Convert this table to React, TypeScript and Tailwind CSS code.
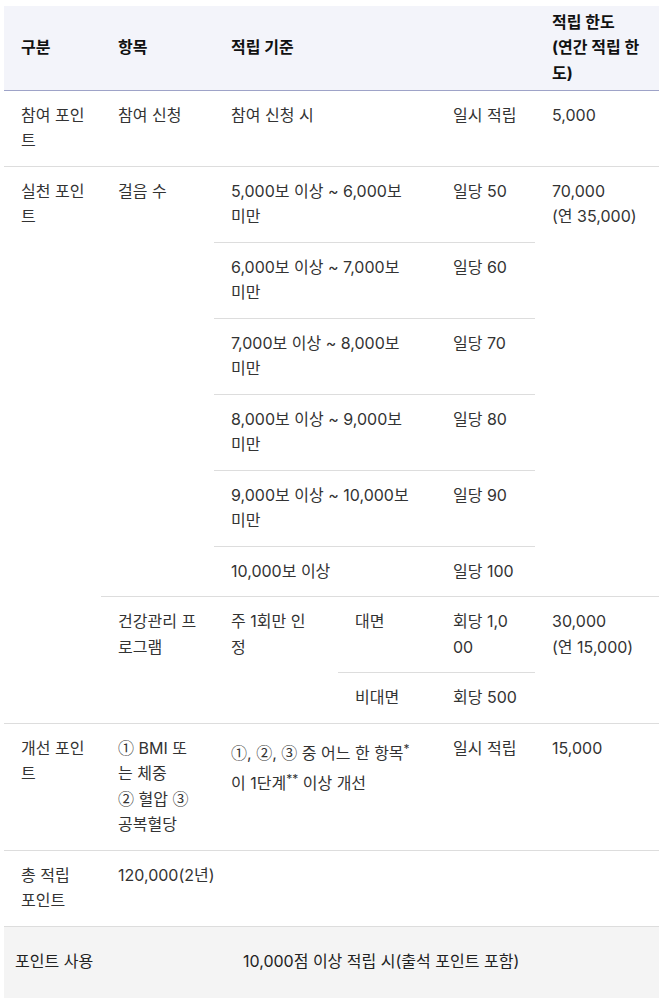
export default function App() {
  const th = "px-[17px] py-[3.5px] text-left align-middle font-bold text-[#111]";
  const td = "pl-[17px] pr-[16px] py-3 align-top border-b border-[#dddddd]";
  const num = "font-['Noto_Sans_CJK_KR'] leading-none";

  const steps = [
    ["5,000보 이상 ~ 6,000보 미만", "일당 50"],
    ["6,000보 이상 ~ 7,000보 미만", "일당 60"],
    ["7,000보 이상 ~ 8,000보 미만", "일당 70"],
    ["8,000보 이상 ~ 9,000보 미만", "일당 80"],
    ["9,000보 이상 ~ 10,000보 미만", "일당 90"],
    ["10,000보 이상", "일당 100"],
  ];

  return (
    <div
      className="bg-white px-[4px] pt-[6px] text-[16px] leading-[25.5px] text-[#333] [word-break:break-all]"
      style={{ fontFamily: 'Inter, "Noto Sans CJK KR", sans-serif' }}
    >
      {/* 포인트 적립 표 */}
      <table className="w-full table-fixed border-collapse">
        <colgroup>
          <col className="w-[97px]" />
          <col className="w-[113px]" />
          <col className="w-[124px]" />
          <col className="w-[98px]" />
          <col className="w-[99px]" />
          <col className="w-[124px]" />
        </colgroup>
        <thead>
          <tr className="bg-[#f3f4fa] border-b border-[#9ea3c8]">
            <th className={th}>구분</th>
            <th className={th}>항목</th>
            <th className={th} colSpan={3}>
              적립 기준
            </th>
            <th className={th}>
              적립 한도
              <br />
              (연간 적립 한도)
            </th>
          </tr>
        </thead>
        <tbody>
          <tr>
            <td className={td}>참여 포인트</td>
            <td className={td}>참여 신청</td>
            <td className={td} colSpan={2}>
              참여 신청 시
            </td>
            <td className={td}>일시 적립</td>
            <td className={td}>5,000</td>
          </tr>

          {steps.map(([label, amount], i) => (
            <tr key={label}>
              {i === 0 && (
                <>
                  <td className={td} rowSpan={8}>
                    실천 포인트
                  </td>
                  <td className={td} rowSpan={6}>
                    걸음 수
                  </td>
                </>
              )}
              <td className={`${td} [word-break:keep-all]`} colSpan={2}>
                {label}
              </td>
              <td className={td}>{amount}</td>
              {i === 0 && (
                <td className={td} rowSpan={6}>
                  70,000
                  <br />
                  (연 35,000)
                </td>
              )}
            </tr>
          ))}

          <tr>
            <td className={td} rowSpan={2}>
              건강관리 프로그램
            </td>
            <td className={`${td} !pr-[20px]`} rowSpan={2}>
              주 1회만 인정
            </td>
            <td className={td}>대면</td>
            <td className={`${td} !pr-[19px]`}>회당 1,000</td>
            <td className={td} rowSpan={2}>
              30,000
              <br />
              (연 15,000)
            </td>
          </tr>
          <tr>
            <td className={td}>비대면</td>
            <td className={td}>회당 500</td>
          </tr>

          <tr>
            <td className={td}>개선 포인트</td>
            <td className={td}>
              <span className={num}>①</span> BMI 또는 체중
              <br />
              <span className={num}>②</span> 혈압 <span className={num}>③</span> 공복혈당
            </td>
            <td className={td} colSpan={2}>
              <span className={num}>①</span>, <span className={num}>②</span>,{" "}
              <span className={num}>③</span> 중 어느 한 항목
              <span className="align-super text-[12px]">*</span>이 1단계
              <span className="align-super text-[12px]">**</span> 이상 개선
            </td>
            <td className={td}>일시 적립</td>
            <td className={td}>15,000</td>
          </tr>

          <tr>
            <td className={td}>총 적립 포인트</td>
            <td className={td} colSpan={5}>
              120,000(2년)
            </td>
          </tr>
        </tbody>
      </table>

      {/* 포인트 사용 */}
      <div className="flex h-[71px] items-center bg-[#f4f4f4] px-[11px] text-[#222]">
        <div className="w-[228px] shrink-0">포인트 사용</div>
        <div>10,000점 이상 적립 시(출석 포인트 포함)</div>
      </div>
    </div>
  );
}
